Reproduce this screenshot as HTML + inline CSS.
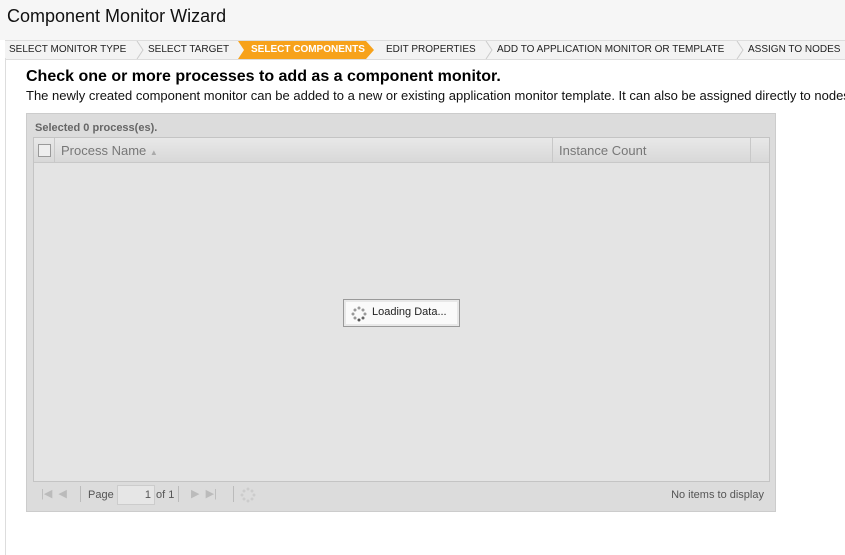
<!DOCTYPE html><html><head><style>
body{margin:0;width:845px;height:555px;overflow:hidden;background:#fff;font-family:"Liberation Sans",Arial,sans-serif;position:relative}
.hdr{position:absolute;left:0;top:0;width:845px;height:40px;background:#f6f6f6}
.hdr h1{margin:0;position:absolute;left:7px;top:6px;font-size:18px;font-weight:normal;color:#111}
.tabs{position:absolute;left:5px;top:40px;width:840px;height:18px;background:#f3f3f3;border-top:1px solid #ddd;border-bottom:1px solid #ddd}
.t{position:absolute;top:0;height:18px;line-height:18px;font-size:10px;color:#222}
.sep{position:absolute;top:0;width:8px;height:18px}
.act{position:absolute;left:233px;top:0;width:136px;height:18px;background:#f7a21b;clip-path:polygon(0 0,128px 0,136px 9px,128px 18px,0 18px,6px 9px)}
.lb{position:absolute;left:5px;top:58px;width:1px;height:497px;background:#ddd}
h2{position:absolute;left:26px;top:68px;margin:0;font-size:16px;font-weight:bold;color:#000}
.sub{position:absolute;left:26px;top:87px;font-size:13px;color:#111;white-space:nowrap}
.panel{position:absolute;left:26px;top:113px;width:748px;height:397px;background:#dcdcdc;border:1px solid #ccc}
.grid{position:absolute;left:6px;top:23px;width:735px;height:343px;background:#e4e4e4;border:1px solid #c4c4c4}
.gh{position:absolute;left:0;top:0;width:735px;height:24px;background:linear-gradient(#e8e8e8,#d8d8d8);border-bottom:1px solid #c8c8c8;font-size:13px;color:#777}
.tb{position:absolute;left:6px;top:367px;width:737px;height:28px;font-size:11px;color:#555}
</style></head><body>
<div class="hdr"><h1>Component Monitor Wizard</h1></div>
<div class="tabs">
<div class="act"></div>
<div class="t" style="left:4px">SELECT MONITOR TYPE</div>
<svg class="sep" style="left:131px"><polyline points="1,0 7,9 1,18" fill="none" stroke="#ccc"/></svg>
<div class="t" style="left:143px">SELECT TARGET</div>
<div class="t" style="left:246px;color:#fff;font-weight:bold">SELECT COMPONENTS</div>
<div class="t" style="left:381px">EDIT PROPERTIES</div>
<svg class="sep" style="left:480px"><polyline points="1,0 7,9 1,18" fill="none" stroke="#ccc"/></svg>
<div class="t" style="left:492px">ADD TO APPLICATION MONITOR OR TEMPLATE</div>
<svg class="sep" style="left:731px"><polyline points="1,0 7,9 1,18" fill="none" stroke="#ccc"/></svg>
<div class="t" style="left:743px">ASSIGN TO NODES</div>
</div>
<div class="lb"></div>
<h2>Check one or more processes to add as a component monitor.</h2>
<div class="sub" style="top:88px">The newly created component monitor can be added to a new or existing application monitor template. It can also be assigned directly to nodes.</div>
<div class="panel">
<div style="position:absolute;left:8px;top:8px;font-size:11px;font-weight:bold;color:#666">Selected 0 process(es).</div>
<div class="grid">
<div class="gh">
<div style="position:absolute;left:4px;top:6px;width:11px;height:11px;border:1px solid #999;background:#eee"></div>
<div style="position:absolute;left:20px;top:0;width:1px;height:24px;background:#c8c8c8"></div>
<div style="position:absolute;left:27px;top:5px">Process Name <span style="font-size:8px;color:#aaa">▲</span></div>
<div style="position:absolute;left:518px;top:0;width:1px;height:24px;background:#c8c8c8"></div>
<div style="position:absolute;left:525px;top:5px">Instance Count</div>
<div style="position:absolute;left:716px;top:0;width:1px;height:24px;background:#c8c8c8"></div>
</div>
<div style="position:absolute;left:309px;top:161px;width:115px;height:26px;border:1px solid #999;background:#fafafa;box-shadow:inset 0 0 0 2px #e8e8e8">
<svg style="position:absolute;left:7px;top:6px" width="16" height="16"><g fill="#999"><circle cx="8" cy="2" r="1.5"/><circle cx="12" cy="4" r="1.5"/><circle cx="14" cy="8" r="1.5"/><circle cx="12" cy="12" r="1.5" fill="#666"/><circle cx="8" cy="14" r="1.5" fill="#555"/><circle cx="4" cy="12" r="1.5"/><circle cx="2" cy="8" r="1.5"/><circle cx="4" cy="4" r="1.5"/></g></svg>
<div style="position:absolute;left:28px;top:6px;font-size:11px;color:#222">Loading Data...</div>
</div>
</div>
<div class="tb">
<div style="position:absolute;left:8px;top:6px;color:#bbb;font-size:11px">|◀ &nbsp;◀</div>
<div style="position:absolute;left:47px;top:5px;width:1px;height:16px;background:#bbb"></div>
<div style="position:absolute;left:55px;top:8px">Page</div>
<div style="position:absolute;left:84px;top:4px;width:36px;height:18px;background:#e6e6e6;border:1px solid #ccc;text-align:right;line-height:18px"><span style="padding-right:3px">1</span></div>
<div style="position:absolute;left:123px;top:8px">of 1</div>
<div style="position:absolute;left:145px;top:5px;width:1px;height:16px;background:#bbb"></div>
<div style="position:absolute;left:158px;top:6px;color:#bbb">▶ &nbsp;▶|</div>
<div style="position:absolute;left:200px;top:5px;width:1px;height:16px;background:#bbb"></div>
<svg style="position:absolute;left:207px;top:6px" width="16" height="16"><g fill="#ccc"><circle cx="8" cy="2" r="1.5"/><circle cx="12" cy="4" r="1.5"/><circle cx="14" cy="8" r="1.5"/><circle cx="12" cy="12" r="1.5"/><circle cx="8" cy="14" r="1.5"/><circle cx="4" cy="12" r="1.5"/><circle cx="2" cy="8" r="1.5"/><circle cx="4" cy="4" r="1.5"/></g></svg>
<div style="position:absolute;right:6px;top:8px">No items to display</div>
</div>
</div>
</body></html>
